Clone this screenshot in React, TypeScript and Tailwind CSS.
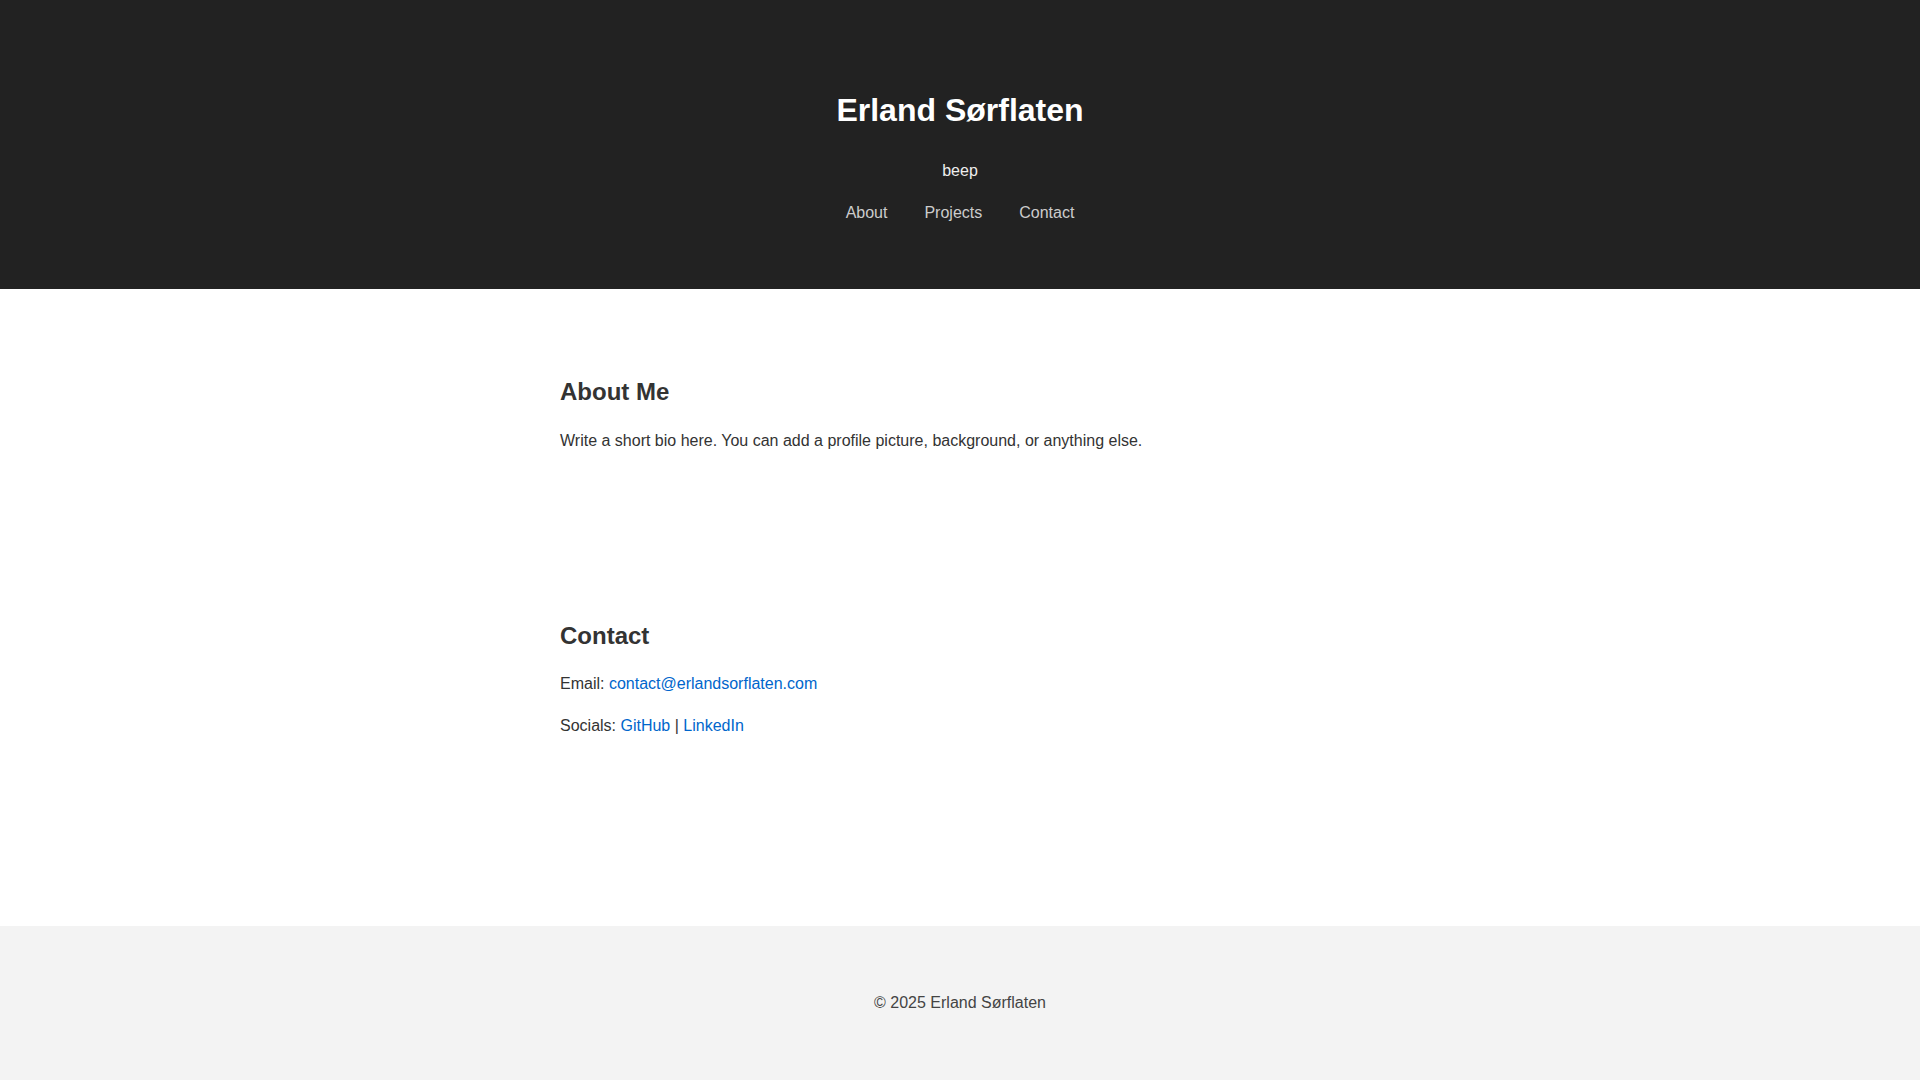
import React from "react";

export default function App() {
  return (
    <div className="min-h-screen flex flex-col bg-white text-[#333] font-['Liberation_Sans',Arial,sans-serif] text-[16px] leading-[1.6]">
      <header className="bg-[#222] text-center pt-[85.2px] pb-[63.4px]">
        <h1 className="text-[32px] font-bold leading-[1.6] text-white mb-[22px]">Erland Sørflaten</h1>
        <p className="text-[#eee] mb-[16px]">beep</p>
        <nav className="flex justify-center gap-[37px] text-[#ccc]">
          <a href="#about">About</a>
          <a href="#projects">Projects</a>
          <a href="#contact">Contact</a>
        </nav>
      </header>
      <main className="w-[800px] mx-auto pt-[84px] pb-[187.5px]">
        <section id="about">
          <h2 className="text-[24px] font-bold leading-[1.6] mb-[17px]">About Me</h2>
          <p>Write a short bio here. You can add a profile picture, background, or anything else.</p>
        </section>
        <section id="contact" className="mt-[163px]">
          <h2 className="text-[24px] font-bold leading-[1.6] mb-[16px]">Contact</h2>
          <p className="mb-[16px]">
            Email: <a href="#" className="text-[#0066cc]">contact@erlandsorflaten.com</a>
          </p>
          <p>
            Socials: <a href="#" className="text-[#0066cc]">GitHub</a> |{" "}
            <a href="#" className="text-[#0066cc]">LinkedIn</a>
          </p>
        </section>
      </main>
      <footer className="bg-[#f3f3f3] text-center text-[#444] pt-[64px] pb-[64px]">
        <p>© 2025 Erland Sørflaten</p>
      </footer>
    </div>
  );
}
